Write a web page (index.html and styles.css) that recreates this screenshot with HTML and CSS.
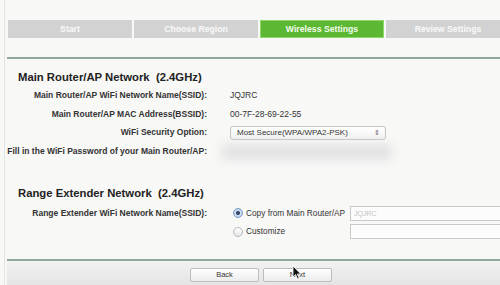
FILE: index.html
```html
<!DOCTYPE html>
<html lang="en">

<head>
    <meta charset="UTF-8">
    <title>Quick Setup - Wireless Settings</title>
    <link rel="stylesheet" href="styles.css">
</head>

<body>
    <div class="frame">
        <!-- Wizard steps -->
        <div class="steps">
            <div class="step">Start</div>
            <div class="step">Choose Region</div>
            <div class="step active">Wireless Settings</div>
            <div class="step">Review Settings</div>
        </div>
        <div class="rule top-rule"></div>

        <!-- Main router section -->
        <h2 class="section-title">Main Router/AP Network&nbsp; (2.4GHz)</h2>
        <div class="form-grid">
            <div class="label">Main Router/AP WiFi Network Name(SSID):</div>
            <div class="value">JQJRC</div>

            <div class="label">Main Router/AP MAC Address(BSSID):</div>
            <div class="value">00-7F-28-69-22-55</div>

            <div class="label">WiFi Security Option:</div>
            <div class="value">
                <div class="select">
                    <span>Most Secure(WPA/WPA2-PSK)</span>
                    <span class="arrows">&#8661;</span>
                </div>
            </div>

            <div class="label">Fill in the WiFi Password of your Main Router/AP:</div>
            <div class="value"><div class="blurred"></div></div>
        </div>

        <!-- Extender section -->
        <h2 class="section-title second">Range Extender Network&nbsp; (2.4GHz)</h2>
        <div class="form-grid">
            <div class="label">Range Extender WiFi Network Name(SSID):</div>
            <div class="value choice">
                <span class="radio checked"></span>
                <span class="choice-text">Copy from Main Router/AP</span>
                <div class="text-input">JQJRC</div>
            </div>

            <div class="label"></div>
            <div class="value choice">
                <span class="radio"></span>
                <span class="choice-text">Customize</span>
                <div class="text-input"></div>
            </div>
        </div>

        <div class="rule bottom-rule"></div>

        <!-- Footer buttons -->
        <div class="footer">
            <button class="btn">Back</button>
            <button class="btn">Next</button>
        </div>

        <svg class="cursor" width="10" height="15" viewBox="0 0 10 15">
            <path d="M1 1 L1 12 L3.6 9.6 L5.6 14 L7.2 13.3 L5.3 9 L8.8 9 Z" fill="#111" stroke="#fff" stroke-width="0.8" />
        </svg>
    </div>
</body>

</html>
```

FILE: styles.css
```css
/* Page */
body {
    margin: 0;
    background-color: #f8f8f7;
    font-family: 'Liberation Sans', Arial, sans-serif;
    color: #333;
}

.frame {
    position: relative;
    width: 500px;
    height: 285px;
    overflow: hidden;
    margin-left: 4px;
    border-left: 1px solid #e4e6e4;
    box-sizing: border-box;
}

/* Wizard steps */
.steps {
    display: flex;
    gap: 2px;
    margin: 20px 0 0 3px;
    height: 18px;
}

.step {
    flex: 0 0 124px;
    background-color: #d2d2d2;
    color: #fafafa;
    font-size: 8.7px;
    font-weight: bold;
    text-align: center;
    line-height: 18px;
}

.step.active {
    background-color: #5cb832;
    box-shadow: inset 0 0 0 1px #8fd86c;
    color: #f2fbee;
}

.rule {
    height: 2px;
    margin-left: 2px;
    background-color: #8fa99b;
}

.top-rule {
    margin-top: 19px;
}

.bottom-rule {
    margin-top: 20px;
}

/* Sections */
.section-title {
    margin: 12px 0 5px 13px;
    font-size: 11.3px;
    color: #222;
}

.section-title.second {
    margin-top: 27px;
    margin-bottom: 7px;
}

.form-grid {
    display: grid;
    grid-template-columns: 202px 1fr;
    column-gap: 23px;
    row-gap: 3.5px;
}

.label {
    font-size: 8.5px;
    font-weight: bold;
    text-align: right;
    white-space: nowrap;
    line-height: 15px;
    color: #333;
}

.value {
    font-size: 8.5px;
    line-height: 15px;
    color: #333;
    display: flex;
    align-items: center;
}

.select {
    width: 156px;
    height: 14px;
    border: 1px solid #c4c4c4;
    border-radius: 3px;
    background: linear-gradient(#ffffff, #f1f1f1);
    display: flex;
    justify-content: space-between;
    align-items: center;
    padding: 0 5px 0 6px;
    box-sizing: border-box;
    font-size: 8px;
}

.arrows {
    font-size: 7px;
    color: #666;
}

.blurred {
    width: 170px;
    height: 16px;
    margin-left: -8px;
    background-color: #e3e3e3;
    filter: blur(5px);
}

/* Extender choices */
.choice {
    gap: 3px;
    padding-left: 3px;
}

.radio {
    width: 8px;
    height: 8px;
    border: 1px solid #b9b9b9;
    border-radius: 50%;
    background: linear-gradient(#ffffff, #e6e6e6);
    flex: none;
}

.radio.checked {
    background: radial-gradient(circle, #3a4a6a 0 1.6px, #cfe0f2 2.4px, #9fbde0 100%);
    border-color: #7e9cc4;
}

.choice-text {
    width: 101px;
    flex: none;
    white-space: nowrap;
    font-size: 8.3px;
}

.text-input {
    flex: 1;
    height: 13px;
    border: 1px solid #c9c9c9;
    border-right: none;
    background-color: #fcfcfc;
    font-size: 7px;
    color: #c4c4c4;
    line-height: 13px;
    padding-left: 3px;
}

/* Footer */
.footer {
    display: flex;
    justify-content: center;
    gap: 4px;
    height: 27px;
    align-items: center;
    margin-left: 2px;
    padding-left: 11px;
    background: linear-gradient(#f2f2f2, #e3e3e3);
}

.btn {
    width: 69px;
    height: 14px;
    border: 1px solid #bdbdbd;
    border-radius: 2px;
    background: linear-gradient(#ffffff, #ececec);
    font-family: 'Liberation Sans', Arial, sans-serif;
    font-size: 7.5px;
    color: #333;
    padding: 0;
}

.cursor {
    position: absolute;
    left: 287px;
    top: 265px;
}
```
